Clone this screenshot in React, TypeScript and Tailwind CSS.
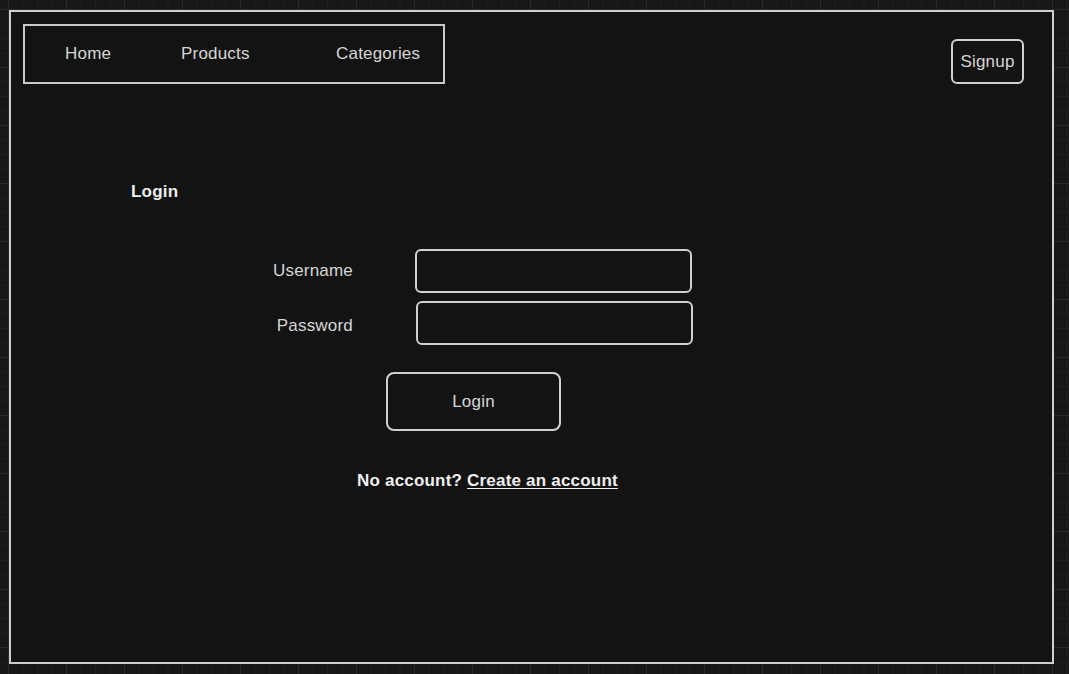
export default function App() {
  return (
    <div
      className="h-[674px] w-full overflow-hidden bg-[#171717] bg-[linear-gradient(to_right,#2a2a2a_1px,transparent_1px),linear-gradient(to_bottom,#2a2a2a_1px,transparent_1px),linear-gradient(to_right,#1f1f1f_1px,transparent_1px),linear-gradient(to_bottom,#1f1f1f_1px,transparent_1px)] bg-size-[58px_58px,58px_58px,14.5px_14.5px,14.5px_14.5px] bg-position-[8px_9px,8px_9px,8px_9px,8px_9px] pl-[9px] pt-[10px] font-['Liberation_Sans',Arial,sans-serif] tracking-[0.2px]"
    >
      <div className="flex h-[654px] w-[1045px] flex-col border-2 border-[#cfcfcf] bg-[#131313]">
        {/* header */}
        <div className="flex items-start justify-between pl-3 pr-[28px] pt-3">
          <nav className="flex h-[60px] w-[422px] items-center border-2 border-[#c9c9c9] pl-[40px] text-[17px] text-[#d6d6d6]">
            <span className="w-[116px]">Home</span>
            <span className="w-[155px]">Products</span>
            <span>Categories</span>
          </nav>
          <button className="mt-[15px] flex h-[45px] w-[73px] items-center justify-center rounded-[6px] border-2 border-[#d0d0d0] text-[17px] text-[#d6d6d6]">
            Signup
          </button>
        </div>

        {/* content */}
        <h1 className="ml-[120px] mt-[98px] text-[17px] font-bold leading-[20px] text-[#eeeeee]">Login</h1>

        <div className="mt-[47px] grid grid-cols-[404px_280px] items-center gap-y-[8px]">
          <label className="pr-[62px] text-right text-[17px] text-[#d6d6d6]">Username</label>
          <input className="h-[44px] w-[277px] rounded-[6px] border-2 border-[#d0d0d0] bg-transparent outline-none" />
          <label className="pr-[62px] pt-[5px] text-right text-[17px] text-[#d6d6d6]">Password</label>
          <input className="ml-px h-[44px] w-[277px] rounded-[6px] border-2 border-[#d0d0d0] bg-transparent outline-none" />
        </div>

        <button className="ml-[375px] mt-[27px] flex h-[59px] w-[175px] items-center justify-center rounded-[8px] border-2 border-[#d0d0d0] text-[17px] text-[#d6d6d6]">
          Login
        </button>

        <p className="ml-[346px] mt-[37px] text-[17px] font-bold text-[#eeeeee]">
          No account? <a className="underline underline-offset-2">Create an account</a>
        </p>
      </div>
    </div>
  );
}
